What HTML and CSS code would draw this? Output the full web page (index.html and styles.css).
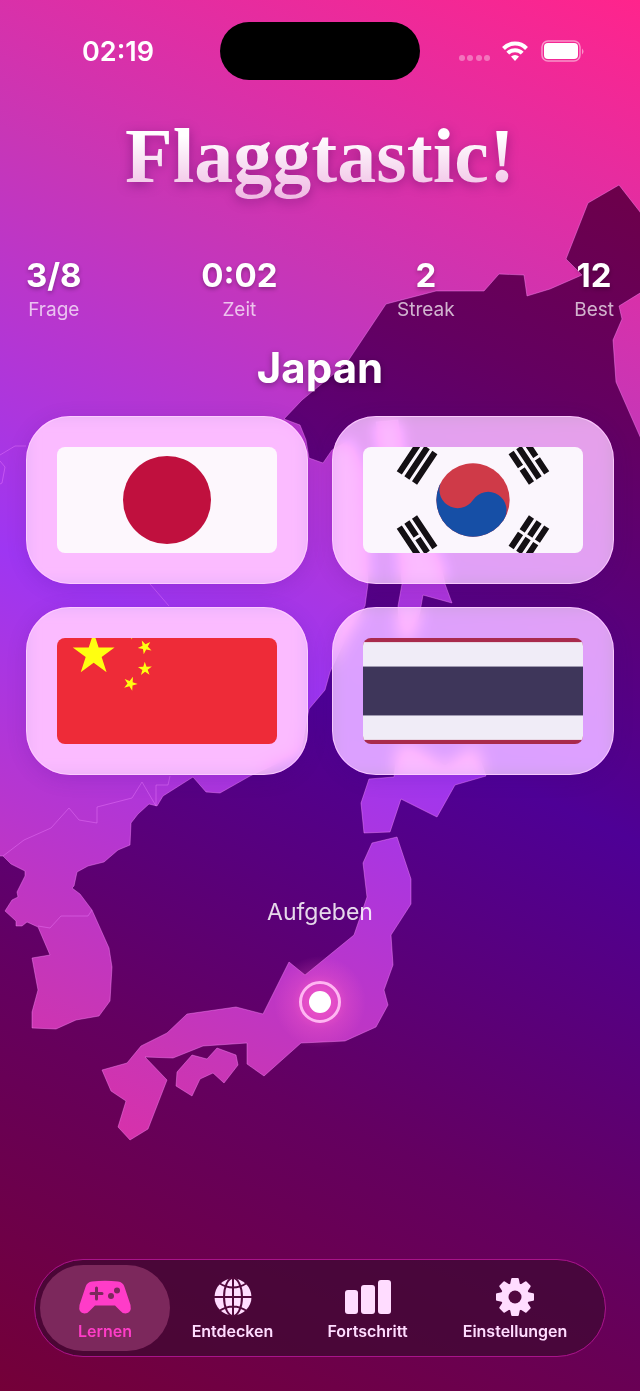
FILE: index.html
```html
<!DOCTYPE html>
<html lang="de">
<head>
    <meta charset="UTF-8">
    <meta name="viewport" content="width=device-width, initial-scale=1.0">
    <title>Flaggtastic!</title>
    <link rel="stylesheet" href="styles.css">
</head>
<body>
    <svg class="map" viewBox="0 0 640 1391" preserveAspectRatio="xMidYMid slice" aria-hidden="true">
        <defs>
            <linearGradient id="sea" gradientUnits="userSpaceOnUse" x1="640" y1="0" x2="0" y2="1391">
                <stop offset="0" stop-color="#740038"/>
                <stop offset="0.25" stop-color="#640060"/>
                <stop offset="0.5" stop-color="#4e0096"/>
                <stop offset="0.75" stop-color="#640060"/>
                <stop offset="1" stop-color="#740038"/>
            </linearGradient>
            <linearGradient id="land" gradientUnits="userSpaceOnUse" x1="640" y1="0" x2="0" y2="1391">
                <stop offset="0" stop-color="#ff248c"/>
                <stop offset="0.25" stop-color="#c836b6"/>
                <stop offset="0.5" stop-color="#9e36f2"/>
                <stop offset="0.75" stop-color="#c836b6"/>
                <stop offset="1" stop-color="#ff248c"/>
            </linearGradient>
            <radialGradient id="glow">
                <stop offset="0.3" stop-color="#ff5cc8" stop-opacity="0.6"/>
                <stop offset="0.6" stop-color="#ff5cc8" stop-opacity="0.25"/>
                <stop offset="1" stop-color="#ff5cc8" stop-opacity="0"/>
            </radialGradient>
        </defs>
        <rect width="640" height="1391" fill="url(#sea)"/>
        <g class="land" fill="url(#land)">
            <!-- Mainland and Korea -->
            <path d="M-5-5H645V220L640 212 619 185 588 203 566 259 582 275 550 289 527 296 524 275 499 274 484 291H436L386 304 346 364 302 400 284 419 300 425 306 440 309 458 323 463 332 450 350 440 362 470 366 530 368 584 365 606 345 640 330 672 325 690 309 709 300 755 280 762 250 776 220 793 206 792 193 777 163 796 157 806 149 804 138 814 131 823 130 845 118 850 104 862 88 866 77 872 74 886 72 888 80 894 92 910 109 948 112 967 110 1001 99 1016 76 1020 56 1029 32 1028 32 1012 38 990 32 958 50 955 38 927 27 922 22 926 16 926 16 921 5 911 12 900 18 897 17 892 25 876 25 871 11 864 3 856-5 856z"/>
            <!-- Kamchatka -->
            <path d="M645 290 619 306 622 319 613 340 616 382 645 448z"/>
            <!-- Sakhalin -->
            <path d="M376 422 398 420 403 470 420 530 440 560 445 584 452 603 423 595 420 612 412 640 400 640 398 606 402 584 400 550 385 480z"/>
            <!-- Hokkaido -->
            <path d="M369 779 394 777 398 745 412 745 445 766 475 745 486 776 455 785 437 817 401 799 390 832 364 833 361 803z"/>
            <!-- Honshu and Kyushu -->
            <path d="M372 843 397 837 411 879V904L391 935 393 965 384 990 388 1005 376 1027 345 1041 301 1043 264 1076 247 1064V1043L203 1046 173 1058 145 1057 167 1080 148 1129 130 1140 118 1127 126 1101 111 1091 102 1070 127 1063 141 1046 167 1033 187 1014 236 1007 263 1014 289 962 305 975 354 935 367 897 363 863z"/>
            <!-- Shikoku -->
            <path d="M192 1055 207 1059 217 1048 236 1055 238 1065 224 1083 213 1073 200 1079 192 1096 176 1086 177 1072z"/>
        </g>
        <g class="borders">
            <path d="M3 856 24 840 51 828 69 808 79 820 97 823V807L132 798 142 782 156 806V785H168L170 776"/>
            <path d="M38 926 50 928 61 916H88L92 910"/>
            <path d="M0 455 15 446H26M0 461 5 467 2 483 0 484M150 584 169 606"/>
        </g>
        <circle cx="320" cy="1002" r="46" fill="url(#glow)"/>
        <circle cx="320" cy="1002" r="19.500" fill="none" stroke="#ffb6f2" stroke-width="3"/>
        <circle cx="320" cy="1002" r="11" fill="#fff"/>
    </svg>

    <div class="app">
        <header class="status-bar">
            <time class="clock">02:19</time>
            <div class="island"></div>
            <svg class="status-icons" width="126" height="24" viewBox="0 0 126 24" fill="#fff" aria-hidden="true">
                <g opacity="0.35">
                    <circle cx="3" cy="19" r="3"/>
                    <circle cx="11" cy="19" r="3"/>
                    <circle cx="20" cy="19" r="3"/>
                    <circle cx="28" cy="19" r="3"/>
                </g>
                <g fill="none" stroke="#fff" stroke-width="4">
                    <path d="M44.500 9.500a16 16 0 0 1 23 0"/>
                    <path d="M48.800 14.200a10 10 0 0 1 14.400 0"/>
                </g>
                <path d="M52 17.500a6 6 0 0 1 8 0L56 22z"/>
                <rect x="83" y="2" width="38" height="20" rx="6" fill="none" stroke="#fff" stroke-width="1.500" opacity="0.5"/>
                <rect x="85" y="4" width="34" height="16" rx="4"/>
                <path d="M123 9.500q3 3 0 6z" opacity="0.5"/>
            </svg>
        </header>

        <h1 class="logo">Flaggtastic!</h1>

        <dl class="stats">
            <div class="stat"><dt>Frage</dt><dd>3/8</dd></div>
            <div class="stat"><dt>Zeit</dt><dd>0:02</dd></div>
            <div class="stat"><dt>Streak</dt><dd>2</dd></div>
            <div class="stat"><dt>Best</dt><dd>12</dd></div>
        </dl>

        <main>
            <h2 class="question">Japan</h2>
            <div class="answers">
                <button class="card" type="button" aria-label="Flagge 1">
                    <svg class="flag" viewBox="0 0 30 20" preserveAspectRatio="xMidYMid slice">
                        <rect width="30" height="20" fill="#fdf7fd"/>
                        <circle cx="15" cy="10" r="6" fill="#c0103e"/>
                    </svg>
                </button>
                <button class="card" type="button" aria-label="Flagge 2">
                    <svg class="flag" viewBox="-36 -24 72 48" preserveAspectRatio="xMidYMid slice">
                        <rect x="-36" y="-24" width="72" height="48" fill="#fbf6fd"/>
                        <g transform="rotate(-56.3)">
                            <g id="bars">
                                <path id="bar3" d="M-6-25H6M-6-22H6M-6-19H6" stroke="#141014" stroke-width="2"/>
                                <use href="#bar3" y="44"/>
                            </g>
                            <path stroke="#fbf6fd" d="M0 17v10"/>
                            <circle r="12" fill="#cf3a48"/>
                            <path fill="#164fa6" d="M0-12A6 6 0 0 0 0 0 6 6 0 0 1 0 12 12 12 0 0 1 0-12z"/>
                        </g>
                        <g transform="rotate(-123.7)">
                            <use href="#bars"/>
                            <path stroke="#fbf6fd" d="M0-23.500v3M0 17v3.500m0 3v3.500"/>
                        </g>
                    </svg>
                </button>
                <button class="card" type="button" aria-label="Flagge 3">
                    <svg class="flag" viewBox="0 0 30 20" preserveAspectRatio="xMidYMid slice">
                        <defs>
                            <path id="star" d="M0-1 .225-.309H.951L.363.118.588.809 0 .382-.588.809-.363.118-.951-.309H-.225z" fill="#ffff10"/>
                        </defs>
                        <rect width="30" height="20" fill="#ee2b38"/>
                        <use href="#star" transform="translate(5 5) scale(3)"/>
                        <use href="#star" transform="translate(10 2) rotate(23)"/>
                        <use href="#star" transform="translate(12 4) rotate(46)"/>
                        <use href="#star" transform="translate(12 7) rotate(70)"/>
                        <use href="#star" transform="translate(10 9) rotate(21)"/>
                    </svg>
                </button>
                <button class="card" type="button" aria-label="Flagge 4">
                    <svg class="flag" viewBox="0 0 9 6" preserveAspectRatio="xMidYMid slice">
                        <rect width="9" height="6" fill="#a92a4c"/>
                        <rect y="1" width="9" height="4" fill="#f0ecf7"/>
                        <rect y="2" width="9" height="2" fill="#3e365a"/>
                    </svg>
                </button>
            </div>
            <button class="give-up" type="button">Aufgeben</button>
        </main>

        <nav class="tab-bar">
            <a class="tab active" href="#lernen">
                <svg width="54" height="40" viewBox="0 0 54 40" fill="currentColor" aria-hidden="true">
                    <path d="M14 4.500Q27 3 40 4.500q5 .5 6.500 5.500L52.500 28Q54 36 47.500 36.500q-3 0-5-2.500L37 28.500H17L11.500 34q-2 2.500-5 2.500Q0 36 1.500 28L7.500 10Q9 5 14 4.500z"/>
                    <path class="cut-line" d="M18.500 11v11M13 16.500h11"/>
                    <circle class="cut" cx="39" cy="13.500" r="3"/>
                    <circle class="cut" cx="33" cy="19" r="3"/>
                </svg>
                <span>Lernen</span>
            </a>
            <a class="tab" href="#entdecken">
                <svg width="40" height="40" viewBox="0 0 40 40" aria-hidden="true">
                    <circle cx="20" cy="20" r="18.500" fill="currentColor"/>
                    <g class="grid-lines">
                        <path d="M20 1v38M1 20h38M6 6q14 9 28 0M6 34q14-9 28 0"/>
                        <ellipse cx="20" cy="20" rx="9" ry="19"/>
                    </g>
                </svg>
                <span>Entdecken</span>
            </a>
            <a class="tab" href="#fortschritt">
                <svg width="48" height="40" viewBox="0 0 48 40" fill="currentColor" aria-hidden="true">
                    <rect x="1" y="13" width="13" height="24" rx="3"/>
                    <rect x="17" y="8" width="14" height="29" rx="3"/>
                    <rect x="34" y="3" width="13" height="34" rx="3"/>
                </svg>
                <span>Fortschritt</span>
            </a>
            <a class="tab" href="#einstellungen">
                <svg width="40" height="40" viewBox="-20 -20 40 40" aria-hidden="true">
                    <g fill="currentColor" stroke="currentColor" stroke-width="2" stroke-linejoin="round">
                        <circle r="13"/>
                        <path id="tooth" d="M-4-12-2.800-18H2.800L4-12z"/>
                        <use href="#tooth" transform="rotate(45)"/>
                        <use href="#tooth" transform="rotate(90)"/>
                        <use href="#tooth" transform="rotate(135)"/>
                        <use href="#tooth" transform="rotate(180)"/>
                        <use href="#tooth" transform="rotate(225)"/>
                        <use href="#tooth" transform="rotate(270)"/>
                        <use href="#tooth" transform="rotate(315)"/>
                    </g>
                    <circle class="hole" r="6.500"/>
                </svg>
                <span>Einstellungen</span>
            </a>
        </nav>
    </div>
</body>
</html>
```
FILE: styles.css
```css
* {
    box-sizing: border-box;
}
body {
    margin: 0;
    position: relative;
    min-height: 100vh;
    background-color: #4e0098;
    color: #fff;
    font-family: Inter, "Liberation Sans", sans-serif;
}
.map {
    position: absolute;
    top: 0;
    left: 0;
    width: 100%;
    height: 100%;
}
.land path {
    stroke: rgba(255, 150, 255, 0.4);
    stroke-width: 1;
}
.borders {
    fill: none;
    stroke: rgba(240, 130, 255, 0.4);
    stroke-width: 1;
}
.app {
    position: relative;
    display: flex;
    flex-direction: column;
    min-height: 100vh;
    padding: 22px 0 34px;
}

/* Status bar */
.status-bar {
    display: grid;
    grid-template-columns: 1fr 200px 1fr;
    align-items: center;
}
.clock {
    padding-left: 16px;
    text-align: center;
    font-size: 27px;
    font-weight: 600;
}
.island {
    height: 58px;
    border-radius: 29px;
    background-color: #000;
}
.status-icons {
    justify-self: center;
    margin-right: 16px;
}

.logo {
    align-self: center;
    margin: 26px 0 0;
    padding: 0 8px;
    font-family: "Liberation Serif", serif;
    font-size: 78px;
    font-weight: bold;
    line-height: 100px;
    background: linear-gradient(#fff 30%, #f0bce4 90%);
    -webkit-background-clip: text;
    background-clip: text;
    color: transparent;
    filter: drop-shadow(0 3px 6px rgba(60, 0, 80, 0.4));
}

/* Stats */
.stats {
    display: flex;
    justify-content: space-between;
    margin: 48px 26px 0;
}
.stat {
    display: flex;
    flex-direction: column-reverse;
    align-items: center;
}
.stat dt {
    font-size: 19px;
    line-height: 28px;
    color: rgba(255, 255, 255, 0.7);
}
.stat dd {
    margin: 0;
    font-size: 33px;
    font-weight: 700;
    line-height: 42px;
    text-shadow: 0 2px 4px rgba(0, 0, 0, 0.3);
}
.question {
    margin: 18px 0 22px;
    font-size: 42px;
    font-weight: 700;
    line-height: 52px;
    text-align: center;
    text-shadow: 0 2px 6px rgba(0, 0, 0, 0.35);
}

/* Answer cards */
.answers {
    display: grid;
    grid-template-columns: 1fr 1fr;
    gap: 23px 24px;
    margin: 0 26px;
}
.card {
    display: flex;
    height: 168px;
    padding: 30px;
    border: 1px solid rgba(255, 210, 255, 0.8);
    border-radius: 44px;
    background-color: rgba(250, 222, 255, 0.72);
    -webkit-backdrop-filter: blur(8px) brightness(1.8);
    backdrop-filter: blur(8px) brightness(1.8);
    box-shadow: 0 4px 20px rgba(60, 0, 120, 0.15);
    cursor: pointer;
}
.flag {
    flex: 1;
    width: 100%;
    height: 100%;
    border-radius: 8px;
}
.give-up {
    display: block;
    margin: 116px auto 0;
    padding: 6px 12px;
    border: none;
    background: none;
    color: rgba(255, 255, 255, 0.85);
    font-family: inherit;
    font-size: 23px;
    line-height: 30px;
    cursor: pointer;
}

/* Tab bar */
.tab-bar {
    display: grid;
    grid-template-columns: 26fr 25fr 29fr 30fr;
    margin: auto 34px 0;
    padding: 5px 15px 5px 5px;
    border: 1px solid #a8148a;
    border-radius: 49px;
    background-color: rgba(60, 8, 48, 0.7);
    background-clip: padding-box;
}
.tab {
    display: flex;
    flex-direction: column;
    align-items: center;
    gap: 3px;
    height: 86px;
    padding-top: 12px;
    border-radius: 43px;
    color: #ffdcff;
    font-size: 16px;
    font-weight: 600;
    line-height: 22px;
    text-decoration: none;
}
.tab svg {
    flex: none;
}
.tab.active {
    background-color: #7c285c;
    color: #ff3cc8;
}
.cut {
    fill: #7c285c;
}
.cut-line {
    stroke: #7c285c;
    stroke-width: 3;
    stroke-linecap: round;
}
.grid-lines {
    fill: none;
    stroke: #52083c;
    stroke-width: 2;
}
.hole {
    fill: #50083f;
}
```
